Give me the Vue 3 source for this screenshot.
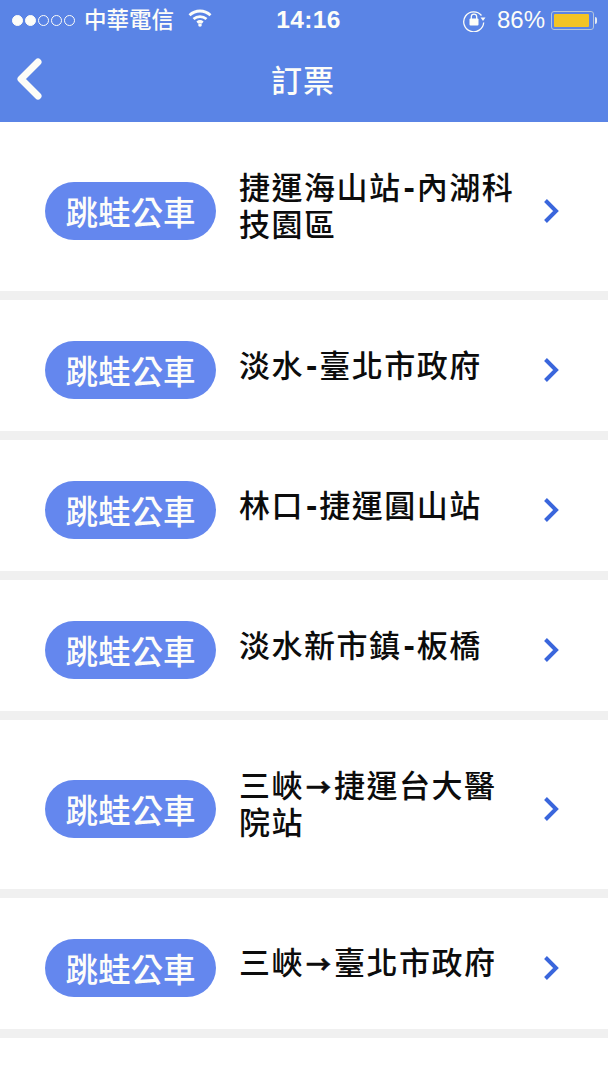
<script setup>
const routes = [
  { id: 1, name: ['捷運海山站', '-', '內湖科'], more: '技園區', tall: true },
  { id: 2, name: ['淡水', '-', '臺北市政府'] },
  { id: 3, name: ['林口', '-', '捷運圓山站'] },
  { id: 4, name: ['淡水新市鎮', '-', '板橋'] },
  { id: 5, name: ['三峽', '→', '捷運台大醫'], more: '院站', tall: true },
  { id: 6, name: ['三峽', '→', '臺北市政府'] },
]
</script>

<template>
  <div class="page">
    <header class="head">
      <div class="status">
        <div class="status-left">
          <span class="dots">
            <i class="dot on"></i><i class="dot on"></i><i class="dot"></i><i class="dot"></i><i class="dot"></i>
          </span>
          <span class="carrier">中華電信</span>
          <svg class="wifi" viewBox="0 0 24 18">
            <path d="M1.500 6.200C7.500.6 16.500.6 22.500 6.200" />
            <path d="M5.500 10C9.300 6.700 14.700 6.700 18.500 10" />
            <path d="M9.300 13.600C10.900 12.300 13.100 12.300 14.700 13.600" />
            <circle cx="12" cy="16" r="1.800" />
          </svg>
        </div>
        <span class="time">14:16</span>
        <div class="status-right">
          <svg class="lock" viewBox="0 0 24 24">
            <path class="arc" d="M19.500 7.500A10 10 0 1 0 21.700 14.500" />
            <path class="fill" d="M18.500 9.500h5l-2.500 3.500z" />
            <path class="shackle" d="M9.300 11V8.800a2.700 2.700 0 0 1 5.400 0V11" />
            <rect class="fill" x="7.500" y="10.500" width="9" height="7" rx="1" />
          </svg>
          <span class="pct">86%</span>
          <span class="battery"><span class="level"></span></span>
          <span class="nub"></span>
        </div>
      </div>
      <div class="nav">
        <svg class="back" viewBox="0 0 28 42">
          <path d="M23 4 6 21l17 17" />
        </svg>
        <span class="title">訂票</span>
      </div>
    </header>

    <ul class="list">
      <li v-for="r in routes" :key="r.id" class="row" :class="{ tall: r.tall }">
        <span class="pill">跳蛙公車</span>
        <div class="name">
          <div>{{ r.name[0] }}<span class="sep" :class="{ arrow: r.name[1] === '→' }">{{ r.name[1] }}</span>{{ r.name[2] }}</div>
          <div v-if="r.more">{{ r.more }}</div>
        </div>
        <svg class="chev" viewBox="0 0 16 26">
          <path d="M2.500 2.500 13 13 2.500 23.500" />
        </svg>
      </li>
    </ul>
  </div>
</template>

<style>
html, body { margin: 0; background: #fff; }
</style>

<style scoped>
.page {
  width: 608px; height: 1080px; overflow: hidden; background: #fff;
  font-family: "Noto Sans CJK TC", "Liberation Sans", sans-serif;
}
.head { height: 122px; background: #5a84e6; color: #fdfdf8; }

.status {
  height: 40px; padding: 0 11px 0 12px;
  display: grid; grid-template-columns: 1fr auto 1fr; align-items: center;
}
.status-left { display: flex; align-items: center; }
.status-right { display: flex; align-items: center; justify-content: flex-end; }
.dots { display: flex; gap: 2px; margin-right: 9px; }
.dot { width: 11px; height: 11px; box-sizing: border-box; border: 1px solid #fdfdf8; border-radius: 50%; }
.dot.on { background: #fdfdf8; }
.carrier { font-size: 22.500px; font-weight: 500; line-height: 36px; margin-top: -4px; }
.wifi { width: 24px; height: 18px; margin-left: 14px; margin-top: -4px; }
.wifi path { fill: none; stroke: #fdfdf8; stroke-width: 2.800; }
.wifi circle { fill: #fdfdf8; }
.time { font: 700 24.500px/40px "Liberation Sans", sans-serif; letter-spacing: 0.400px; margin-left: 8px; }
.lock { width: 24px; height: 24px; margin-right: 11px; }
.lock .arc, .lock .shackle { fill: none; stroke: #fdfdf8; stroke-width: 1.300; }
.lock .fill { fill: #fdfdf8; }
.pct { font: 400 24px/40px "Liberation Sans", sans-serif; margin-right: 6px; }
.battery {
  width: 43px; height: 19px; box-sizing: border-box; padding: 2px;
  border: 1px solid #b5c6dc; border-radius: 3px; display: flex;
}
.level { width: 35px; background: #f2c425; border-radius: 1px; }
.nub { width: 2px; height: 7px; margin-left: 1px; background: #e6ecf5; border-radius: 0 2px 2px 0; }

.nav { position: relative; height: 82px; display: flex; align-items: center; justify-content: center; }
.title { font-size: 31px; line-height: 80px; font-weight: 500; margin-top: -4px; margin-left: -2px; letter-spacing: 1px; }
.back {
  position: absolute; left: 15px; top: 18px; width: 28px; height: 42px;
}
.back path {
  fill: none; stroke: #fdfdf8; stroke-width: 7;
  stroke-linecap: round; stroke-linejoin: round;
}

.list { margin: 0; padding: 0; list-style: none; }
.row {
  height: 131px; box-sizing: border-box; padding: 8px 0 0 45px; margin-bottom: 9px;
  display: flex; align-items: center; background: #fff;
  box-shadow: 0 9px 0 #f0f0f0;
}
.row.tall { height: 169px; }
.pill {
  flex: none; width: 171px; height: 58px; margin-right: 23px;
  background: #6487ee; border-radius: 29px; color: #fdfdfa;
  font-size: 32.500px; font-weight: 500; line-height: 58px; text-align: center;
}
.name {
  flex: none; width: 281px; margin-bottom: 8px;
  font-family: "Liberation Sans", "Noto Sans CJK TC", sans-serif;
  font-size: 31px; line-height: 37px; color: #0c0c0c; font-weight: 500; letter-spacing: 1.500px;
}
.sep { margin: 0 2px; font-size: 34px; font-weight: 700; letter-spacing: 0; }
.sep.arrow {
  margin: 0 3px 0 2px; font: 700 25px/37px "Noto Sans CJK TC", sans-serif;
  -webkit-text-stroke: 0.500px #0c0c0c;
}
.chev { flex: none; width: 16px; height: 26px; margin-left: 23px; }
.chev path { fill: none; stroke: #3a66dc; stroke-width: 4; }
</style>
